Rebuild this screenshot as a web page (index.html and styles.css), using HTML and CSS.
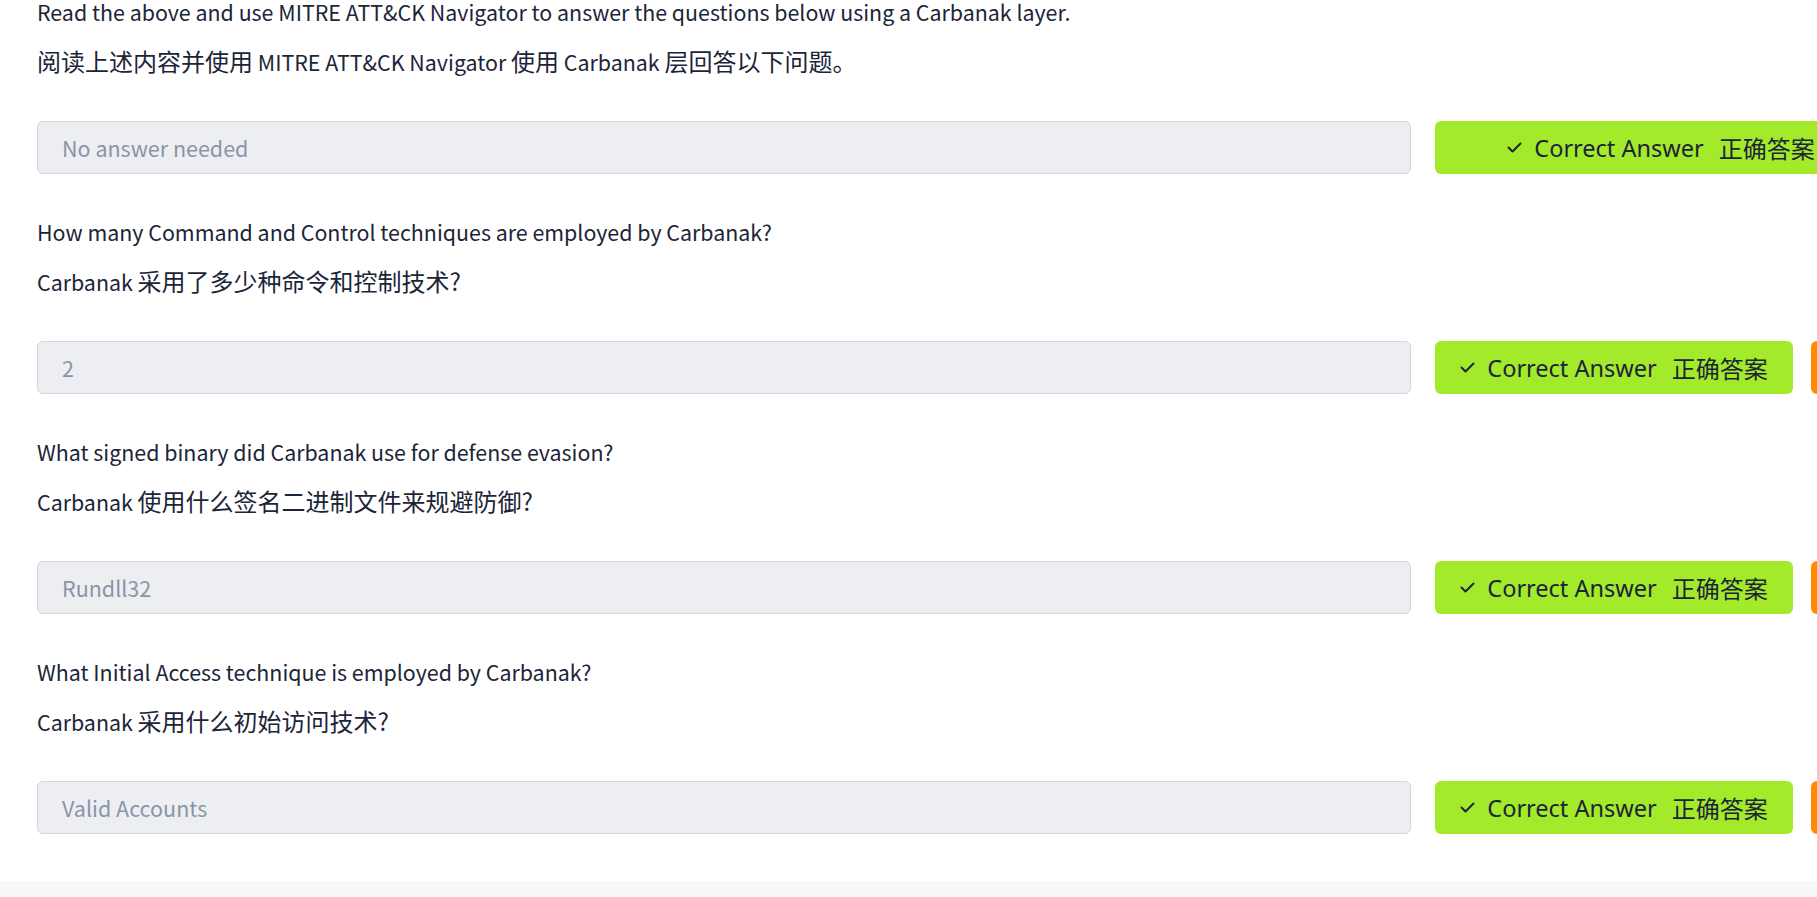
FILE: index.html
```html
<!DOCTYPE html>
<html lang="zh">
<head>
<meta charset="utf-8">
<title>Carbanak</title>
<link rel="stylesheet" href="styles.css">
</head>
<body>
<main class="page">
  <section class="task">
    <p class="q first">Read the above and use MITRE ATT&amp;CK Navigator to answer the questions below using a Carbanak layer.</p>
    <p class="q zh"><span class="han">阅读上述内容并使用</span> MITRE ATT&amp;CK Navigator <span class="han">使用</span> Carbanak <span class="han">层回答以下问题。</span></p>
    <div class="row">
      <div class="answer">No answer needed</div>
      <div class="btn correct wide"><span class="check"><svg width="15" height="11" viewBox="0 0 15 11"><path d="M1.5 5.5 L5.5 9.5 L13.5 1.5" fill="none" stroke="#1c2538" stroke-width="2" stroke-linecap="round" stroke-linejoin="round"/></svg></span><span class="en">Correct Answer</span><span class="cn">正确答案</span></div>
    </div>
  </section>
  <section class="task">
    <p class="q">How many Command and Control techniques are employed by Carbanak?</p>
    <p class="q zh">Carbanak <span class="han">采用了多少种命令和控制技术?</span></p>
    <div class="row">
      <div class="answer">2</div>
      <div class="btn correct"><span class="check"><svg width="15" height="11" viewBox="0 0 15 11"><path d="M1.5 5.5 L5.5 9.5 L13.5 1.5" fill="none" stroke="#1c2538" stroke-width="2" stroke-linecap="round" stroke-linejoin="round"/></svg></span><span class="en">Correct Answer</span><span class="cn">正确答案</span></div>
      <div class="btn hint"></div>
    </div>
  </section>
  <section class="task">
    <p class="q">What signed binary did Carbanak use for defense evasion?</p>
    <p class="q zh">Carbanak <span class="han">使用什么签名二进制文件来规避防御?</span></p>
    <div class="row">
      <div class="answer">Rundll32</div>
      <div class="btn correct"><span class="check"><svg width="15" height="11" viewBox="0 0 15 11"><path d="M1.5 5.5 L5.5 9.5 L13.5 1.5" fill="none" stroke="#1c2538" stroke-width="2" stroke-linecap="round" stroke-linejoin="round"/></svg></span><span class="en">Correct Answer</span><span class="cn">正确答案</span></div>
      <div class="btn hint"></div>
    </div>
  </section>
  <section class="task">
    <p class="q">What Initial Access technique is employed by Carbanak?</p>
    <p class="q zh">Carbanak <span class="han">采用什么初始访问技术?</span></p>
    <div class="row">
      <div class="answer">Valid Accounts</div>
      <div class="btn correct"><span class="check"><svg width="15" height="11" viewBox="0 0 15 11"><path d="M1.5 5.5 L5.5 9.5 L13.5 1.5" fill="none" stroke="#1c2538" stroke-width="2" stroke-linecap="round" stroke-linejoin="round"/></svg></span><span class="en">Correct Answer</span><span class="cn">正确答案</span></div>
      <div class="btn hint"></div>
    </div>
  </section>
</main>
<footer class="band"></footer>
</body>
</html>
```
FILE: styles.css
```css
html, body {
  margin: 0;
  padding: 0;
  background: #ffffff;
  overflow: hidden;
}
body {
  width: 1817px;
  height: 897px;
  display: flex;
  flex-direction: column;
  font-family: "Noto Sans CJK SC", "Noto Sans", sans-serif;
  color: #1c2538;
}
.page {
  padding-left: 37px;
  display: flex;
  flex-direction: column;
  height: 881px;
}
.task {
  display: flex;
  flex-direction: column;
  margin-top: 40px;
}
.task:first-child {
  margin-top: -6px;
}
.q {
  margin: 0;
  font-size: 21.4px;
  line-height: 36px;
  height: 36px;
  white-space: nowrap;
}
.q.zh {
  margin-top: 14px;
}
.han {
  font-size: 24px;
  line-height: 1;
}
.row {
  display: flex;
  align-items: stretch;
  margin-top: 41px;
  height: 53px;
}
.answer {
  box-sizing: border-box;
  width: 1374px;
  flex: none;
  background: #edeef2;
  border: 1px solid #d3d6de;
  border-radius: 6px;
  padding-left: 24px;
  display: flex;
  align-items: center;
  font-size: 21.5px;
  color: #8a94a8;
}
.btn {
  flex: none;
  box-sizing: border-box;
  border-radius: 6px;
}
.correct {
  margin-left: 24px;
  width: 358px;
  background: #a3ea2a;
  display: flex;
  align-items: center;
  justify-content: center;
  color: #1c2538;
}
.correct.wide {
  width: 452px;
}
.check {
  display: flex;
  margin-right: 12px;
}
.en {
  font-family: "Noto Sans", sans-serif;
  font-size: 23.5px;
}
.cn {
  font-family: "Noto Sans CJK SC", sans-serif;
  font-size: 24px;
  margin-left: 15px;
}
.hint {
  margin-left: 18px;
  width: 76px;
  background: #ff8a00;
}
.band {
  flex: 1;
  background: #f7f8fa;
}
```
